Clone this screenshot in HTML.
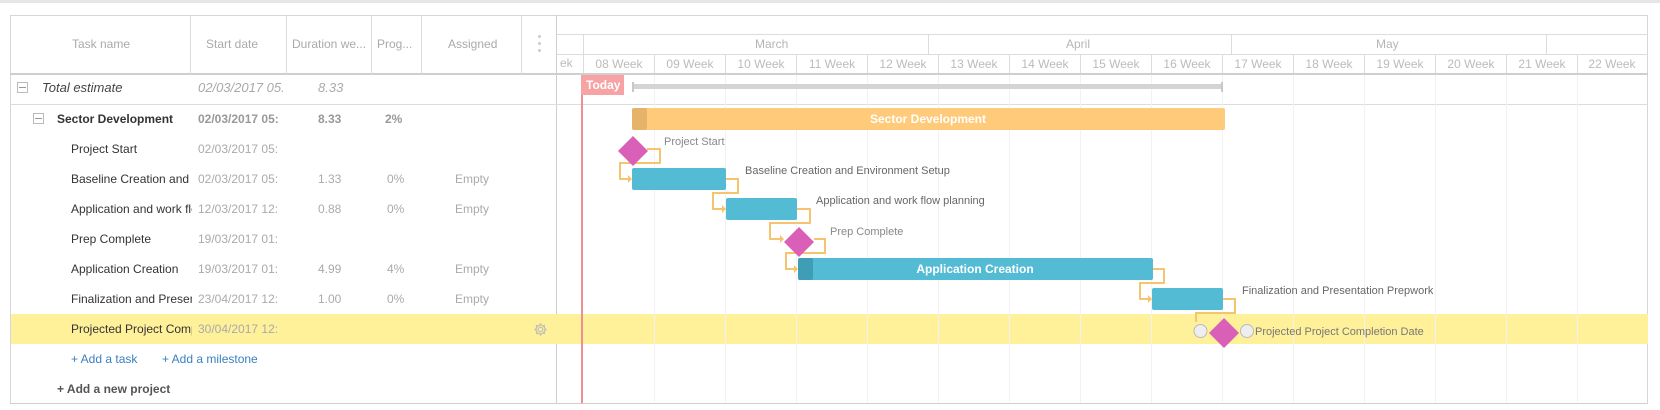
<!DOCTYPE html>
<html><head><meta charset="utf-8"><style>
*{margin:0;padding:0;box-sizing:border-box}
body{width:1660px;height:410px;background:#fff;font-family:"Liberation Sans",Arial,sans-serif;position:relative;overflow:hidden}
.a{position:absolute;white-space:nowrap}
.h{color:#aaa;font-size:12px;top:37px}
.vl{position:absolute;width:1px;background:#dcdcdc}
.hl{position:absolute;height:1px;background:#dcdcdc}
.t{font-size:12px;color:#333;left:71px}
.g{font-size:12px;color:#aaa}
</style></head><body>
<div class="a" style="left:0;top:0;width:1660px;height:3px;background:#e6e6e6"></div>
<div class="a" style="left:10px;top:15px;width:1638px;height:389px;border:1px solid #d6d6d6;border-bottom:1px solid #cfcfcf"></div>
<div class="hl" style="left:10px;top:73px;width:547px;background:#cfcfcf;height:2px"></div>
<div class="vl" style="left:190px;top:15px;height:59px"></div>
<div class="vl" style="left:286px;top:15px;height:59px"></div>
<div class="vl" style="left:371px;top:15px;height:59px"></div>
<div class="vl" style="left:421px;top:15px;height:59px"></div>
<div class="vl" style="left:521px;top:15px;height:59px"></div>
<div class="vl" style="left:556px;top:15px;height:389px;background:#cfcfcf"></div>
<div class="a h" style="left:72px">Task name</div>
<div class="a h" style="left:206px">Start date</div>
<div class="a h" style="left:292px">Duration we...</div>
<div class="a h" style="left:377px">Prog...</div>
<div class="a h" style="left:448px">Assigned</div>
<div class="a" style="left:538px;top:35px;width:3px;height:3px;background:#ccc;border-radius:50%"></div>
<div class="a" style="left:538px;top:42px;width:3px;height:3px;background:#ccc;border-radius:50%"></div>
<div class="a" style="left:538px;top:49px;width:3px;height:3px;background:#ccc;border-radius:50%"></div>
<div class="a" style="left:17px;top:82px;width:11px;height:11px;border:1px solid #bbb;"></div>
<div class="a" style="left:19px;top:87px;width:7px;height:1px;background:#999"></div>
<div class="a" style="left:42px;top:80px;font-size:13px;font-style:italic;color:#444">Total estimate</div>
<div class="a" style="left:198px;top:80px;font-size:13px;font-style:italic;color:#aaa">02/03/2017 05.</div>
<div class="a" style="left:318px;top:80px;font-size:13px;font-style:italic;color:#aaa">8.33</div>
<div class="hl" style="left:10px;top:104px;width:1638px"></div>
<div class="a" style="left:33px;top:113px;width:11px;height:11px;border:1px solid #bbb;"></div>
<div class="a" style="left:35px;top:118px;width:7px;height:1px;background:#999"></div>
<div class="a" style="left:57px;top:112px;font-size:12px;font-weight:bold;color:#333">Sector Development</div>
<div class="a" style="left:198px;top:112px;font-size:12px;font-weight:bold;color:#999">02/03/2017 05:</div>
<div class="a" style="left:318px;top:112px;font-size:12px;font-weight:bold;color:#999">8.33</div>
<div class="a" style="left:385px;top:112px;font-size:12px;font-weight:bold;color:#999">2%</div>
<div class="a" style="left:11px;top:314px;width:1637px;height:30px;background:#fff09a"></div>
<div class="a t" style="top:142px">Project Start</div>
<div class="a g" style="left:198px;top:142px">02/03/2017 05:</div>
<div class="a t" style="top:172px;width:122px;overflow:hidden">Baseline Creation and</div>
<div class="a g" style="left:198px;top:172px">02/03/2017 05:</div>
<div class="a g" style="left:318px;top:172px">1.33</div><div class="a g" style="left:387px;top:172px">0%</div><div class="a g" style="left:455px;top:172px">Empty</div>
<div class="a t" style="top:202px;width:121px;overflow:hidden">Application and work flow</div>
<div class="a g" style="left:198px;top:202px">12/03/2017 12:</div>
<div class="a g" style="left:318px;top:202px">0.88</div><div class="a g" style="left:387px;top:202px">0%</div><div class="a g" style="left:455px;top:202px">Empty</div>
<div class="a t" style="top:232px">Prep Complete</div>
<div class="a g" style="left:198px;top:232px">19/03/2017 01:</div>
<div class="a t" style="top:262px">Application Creation</div>
<div class="a g" style="left:198px;top:262px">19/03/2017 01:</div>
<div class="a g" style="left:318px;top:262px">4.99</div><div class="a g" style="left:387px;top:262px">4%</div><div class="a g" style="left:455px;top:262px">Empty</div>
<div class="a t" style="top:292px;width:121px;overflow:hidden">Finalization and Presentation</div>
<div class="a g" style="left:198px;top:292px">23/04/2017 12:</div>
<div class="a g" style="left:318px;top:292px">1.00</div><div class="a g" style="left:387px;top:292px">0%</div><div class="a g" style="left:455px;top:292px">Empty</div>
<div class="a t" style="top:322px;width:121px;overflow:hidden">Projected Project Completion</div>
<div class="a g" style="left:198px;top:322px">30/04/2017 12:</div>
<svg class="a" style="left:533px;top:322px" width="15" height="15" viewBox="0 0 16 16"><circle cx="8" cy="8" r="2.5" fill="none" stroke="#bbb" stroke-width="1.2"/><path d="M8 1.5v2M8 12.5v2M1.5 8h2M12.5 8h2M3.4 3.4l1.4 1.4M11.2 11.2l1.4 1.4M3.4 12.6l1.4-1.4M11.2 4.8l1.4-1.4" stroke="#bbb" stroke-width="1.6"/><circle cx="8" cy="8" r="4.8" fill="none" stroke="#bbb" stroke-width="1.2"/></svg>
<div class="a" style="left:71px;top:352px;font-size:12px;color:#3a7fc1">+ Add a task</div>
<div class="a" style="left:162px;top:352px;font-size:12px;color:#3a7fc1">+ Add a milestone</div>
<div class="a" style="left:57px;top:382px;font-size:12px;font-weight:bold;color:#555">+ Add a new project</div>
<div class="hl" style="left:557px;top:34px;width:1091px"></div>
<div class="hl" style="left:557px;top:54px;width:1091px"></div>
<div class="hl" style="left:557px;top:73px;width:1091px;height:2px;background:#cfcfcf"></div>
<div class="vl" style="left:583px;top:34px;height:20px"></div>
<div class="vl" style="left:928px;top:34px;height:20px"></div>
<div class="vl" style="left:1231px;top:34px;height:20px"></div>
<div class="vl" style="left:1546px;top:34px;height:20px"></div>
<div class="a" style="left:755px;top:37px;font-size:12px;color:#b5b5b5">March</div>
<div class="a" style="left:1066px;top:37px;font-size:12px;color:#b5b5b5">April</div>
<div class="a" style="left:1376px;top:37px;font-size:12px;color:#b5b5b5">May</div>
<div class="a" style="left:560px;top:56px;font-size:12px;color:#bbb">ek</div>
<svg class="a" style="left:0;top:0" width="1660" height="410">
<g stroke="#f2f2f2" stroke-width="1">
<line x1="654.5" y1="75" x2="654.5" y2="403"/><line x1="725.5" y1="75" x2="725.5" y2="403"/><line x1="796.5" y1="75" x2="796.5" y2="403"/><line x1="867.5" y1="75" x2="867.5" y2="403"/><line x1="938.5" y1="75" x2="938.5" y2="403"/><line x1="1009.5" y1="75" x2="1009.5" y2="403"/><line x1="1080.5" y1="75" x2="1080.5" y2="403"/><line x1="1151.5" y1="75" x2="1151.5" y2="403"/><line x1="1222.5" y1="75" x2="1222.5" y2="403"/><line x1="1293.5" y1="75" x2="1293.5" y2="403"/><line x1="1364.5" y1="75" x2="1364.5" y2="403"/><line x1="1435.5" y1="75" x2="1435.5" y2="403"/><line x1="1506.5" y1="75" x2="1506.5" y2="403"/><line x1="1577.5" y1="75" x2="1577.5" y2="403"/>
</g>
<g stroke="#dcdcdc" stroke-width="1">
<line x1="583.5" y1="54" x2="583.5" y2="73"/><line x1="654.5" y1="54" x2="654.5" y2="73"/><line x1="725.5" y1="54" x2="725.5" y2="73"/><line x1="796.5" y1="54" x2="796.5" y2="73"/><line x1="867.5" y1="54" x2="867.5" y2="73"/><line x1="938.5" y1="54" x2="938.5" y2="73"/><line x1="1009.5" y1="54" x2="1009.5" y2="73"/><line x1="1080.5" y1="54" x2="1080.5" y2="73"/><line x1="1151.5" y1="54" x2="1151.5" y2="73"/><line x1="1222.5" y1="54" x2="1222.5" y2="73"/><line x1="1293.5" y1="54" x2="1293.5" y2="73"/><line x1="1364.5" y1="54" x2="1364.5" y2="73"/><line x1="1435.5" y1="54" x2="1435.5" y2="73"/><line x1="1506.5" y1="54" x2="1506.5" y2="73"/><line x1="1577.5" y1="54" x2="1577.5" y2="73"/>
</g>
<g font-family="Liberation Sans, Arial, sans-serif" font-size="12" fill="#bbb" text-anchor="middle">
<text x="619" y="68">08 Week</text><text x="690" y="68">09 Week</text><text x="761" y="68">10 Week</text><text x="832" y="68">11 Week</text><text x="903" y="68">12 Week</text><text x="974" y="68">13 Week</text><text x="1045" y="68">14 Week</text><text x="1116" y="68">15 Week</text><text x="1187" y="68">16 Week</text><text x="1258" y="68">17 Week</text><text x="1329" y="68">18 Week</text><text x="1400" y="68">19 Week</text><text x="1471" y="68">20 Week</text><text x="1542" y="68">21 Week</text><text x="1612" y="68">22 Week</text>
</g>
<rect x="581" y="75" width="2" height="328" fill="#ef8f92"/>
<rect x="581" y="75" width="43" height="20" fill="#f7a3a5"/>
<text x="586" y="89" font-family="Liberation Sans, Arial, sans-serif" font-size="12" font-weight="bold" fill="#fff">Today</text>
<rect x="632" y="84" width="591" height="5" fill="#d4d4d4"/>
<rect x="632" y="82" width="2" height="10" fill="#c8c8c8"/>
<rect x="1221" y="82" width="2" height="10" fill="#c8c8c8"/>
<rect x="632" y="108" width="593" height="22" rx="2" fill="#ffca7a"/>
<rect x="632" y="108" width="15" height="22" rx="2" fill="#e6b36a"/>
<text x="928" y="123" text-anchor="middle" font-family="Liberation Sans, Arial, sans-serif" font-size="12" font-weight="bold" fill="#fff">Sector Development</text>
<g fill="none" stroke="#f6c46e" stroke-width="2">
<path d="M647 149H660V163H620V179H628"/>
<path d="M726 179H738V193H713V209H722"/>
<path d="M797 209H810V223H770V239H780"/>
<path d="M814 239H825V253H786V269H794"/>
<path d="M1153 269H1164V283H1140V299H1148"/>
<path d="M1223 299H1235V313H1196V322"/>
</g>
<g fill="#f6c46e">
<path d="M628 175l4 4-4 4z"/><path d="M722 205l4 4-4 4z"/><path d="M780 235l4 4-4 4z"/><path d="M794 265l4 4-4 4z"/><path d="M1148 295l4 4-4 4z"/>
</g>
<rect x="632" y="168" width="94" height="22" rx="2" fill="#53bcd4"/>
<rect x="726" y="198" width="71" height="22" rx="2" fill="#53bcd4"/>
<rect x="798" y="258" width="355" height="22" rx="2" fill="#53bcd4"/>
<rect x="798" y="258" width="15" height="22" rx="2" fill="#3f9db5"/>
<text x="975" y="273" text-anchor="middle" font-family="Liberation Sans, Arial, sans-serif" font-size="12" font-weight="bold" fill="#fff">Application Creation</text>
<rect x="1152" y="288" width="71" height="22" rx="2" fill="#53bcd4"/>
<path d="M633 136L648 151L633 166L618 151Z" fill="#d95fb7"/>
<path d="M799 227L814 242L799 257L784 242Z" fill="#d95fb7"/>
<path d="M1224 318L1239 333L1224 348L1209 333Z" fill="#d95fb7"/>
<circle cx="1200.5" cy="331" r="6.5" fill="#eee" stroke="#bbb"/>
<circle cx="1247" cy="331" r="6.5" fill="#eee" stroke="#bbb"/>
<g font-family="Liberation Sans, Arial, sans-serif" font-size="11" fill="#666">
<text x="664" y="145" fill="#888">Project Start</text>
<text x="745" y="174">Baseline Creation and Environment Setup</text>
<text x="816" y="204">Application and work flow planning</text>
<text x="830" y="235" fill="#888">Prep Complete</text>
<text x="1242" y="294">Finalization and Presentation Prepwork</text>
<text x="1255" y="335" fill="#777">Projected Project Completion Date</text>
</g>
</svg>
</body></html>
